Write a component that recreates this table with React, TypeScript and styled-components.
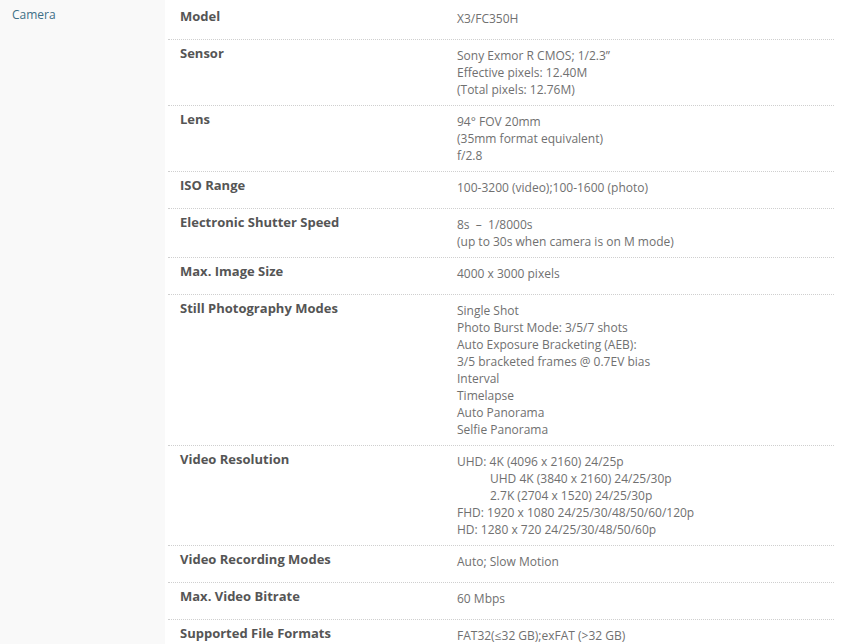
import styled, { createGlobalStyle } from "styled-components";

interface Spec {
    label: string,
    lines: { text: string, indent?: boolean }[],
}

const specs: Spec[] = [
    { label: "Model", lines: [{ text: "X3/FC350H" }] },
    { label: "Sensor", lines: [{ text: "Sony Exmor R CMOS; 1/2.3\u201D" }, { text: "Effective pixels: 12.40M" }, { text: "(Total pixels: 12.76M)" }] },
    { label: "Lens", lines: [{ text: "94\u00B0 FOV 20mm" }, { text: "(35mm format equivalent)" }, { text: "f/2.8" }] },
    { label: "ISO Range", lines: [{ text: "100-3200 (video);100-1600 (photo)" }] },
    { label: "Electronic Shutter Speed", lines: [{ text: "8s \u00A0\u2013 \u00A01/8000s" }, { text: "(up to 30s when camera is on M mode)" }] },
    { label: "Max. Image Size", lines: [{ text: "4000 x 3000 pixels" }] },
    {
        label: "Still Photography Modes", lines: [
            { text: "Single Shot" },
            { text: "Photo Burst Mode: 3/5/7 shots" },
            { text: "Auto Exposure Bracketing (AEB):" },
            { text: "3/5 bracketed frames @ 0.7EV bias" },
            { text: "Interval" },
            { text: "Timelapse" },
            { text: "Auto Panorama" },
            { text: "Selfie Panorama" },
        ]
    },
    {
        label: "Video Resolution", lines: [
            { text: "UHD: 4K (4096 x 2160) 24/25p" },
            { text: "UHD 4K (3840 x 2160) 24/25/30p", indent: true },
            { text: "2.7K (2704 x 1520) 24/25/30p", indent: true },
            { text: "FHD: 1920 x 1080 24/25/30/48/50/60/120p" },
            { text: "HD: 1280 x 720 24/25/30/48/50/60p" },
        ]
    },
    { label: "Video Recording Modes", lines: [{ text: "Auto; Slow Motion" }] },
    { label: "Max. Video Bitrate", lines: [{ text: "60 Mbps" }] },
    { label: "Supported File Formats", lines: [{ text: "FAT32(\u226432 GB);exFAT (>32 GB)" }] },
];

const GlobalStyle = createGlobalStyle`
    body {
        margin: 0;
        background: #ffffff;
        font-family: 'Open Sans', 'Liberation Sans', sans-serif;
    }
`;

const Page = styled.div`
    display: flex;
    min-height: 644px;
`;

const Sidebar = styled.div`
    width: 165px;
    flex-shrink: 0;
    background-color: #f9f9f9;
    padding: 2px 0 0 12px;
    box-sizing: border-box;
`;

const SideLink = styled.a`
    color: #3d6f86;
    font-size: 12px;
    line-height: 17px;
    text-decoration: none;
`;

const Main = styled.div`
    flex: 1;
    padding: 3px 11px 0 3px;
`;

const Row = styled.div`
    display: flex;
    align-items: flex-start;
    border-bottom: 1px dotted #cfcfcf;
`;

const Label = styled.div`
    width: 277px;
    flex-shrink: 0;
    padding: 5px 0 14px 12px;
    font-size: 13px;
    line-height: 17px;
    font-weight: 700;
    color: #555555;
`;

const Values = styled.div`
    padding: 7px 0 7px 0;
    font-size: 12px;
    line-height: 17px;
    color: #707070;
`;

const Line = styled.div<{ $indent?: boolean }>`
    padding-left: ${props => props.$indent ? '33px' : '0'};
    white-space: pre;
`;

export default function App()
{
    return (
        <>
            <GlobalStyle />
            <Page>
                <Sidebar>
                    <SideLink href="#">Camera</SideLink>
                </Sidebar>
                <Main>
                    {
                        specs.map(spec => (
                            <Row key={spec.label}>
                                <Label>{spec.label}</Label>
                                <Values>
                                    {
                                        spec.lines.map(line => (
                                            <Line key={line.text} $indent={line.indent}>{line.text}</Line>
                                        ))
                                    }
                                </Values>
                            </Row>
                        ))
                    }
                </Main>
            </Page>
        </>
    )
}
